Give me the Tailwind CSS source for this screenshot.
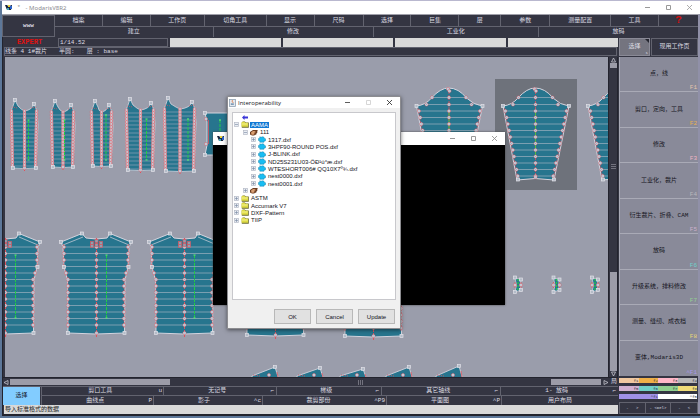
<!DOCTYPE html>
<html lang="en">
<head>
<meta charset="utf-8"/>
<meta name="viewport" content="width=device-width, initial-scale=1"/>
<title>ModarisV8R2</title>
<script src="https://cdn.jsdelivr.net/npm/@tailwindcss/browser@4"></script>
</head>
<body class="h-screen overflow-hidden flex flex-col bg-[#5d7799] border-t border-[#b9b8cf] pl-[2px] pb-[2px] text-[6px] leading-none text-[#dcdce2] font-['Liberation_Mono','Noto_Sans_CJK_SC',monospace]">

<!-- shared icons -->
<svg class="hidden">
  <symbol id="app" viewBox="0 0 8 7"><path d="M0 1l2 0 2 2 2-2 1 0-1 5-4 0z" fill="#18253f"/><path d="M3 1h2v2H3z" fill="#e8d23a"/><path d="M5 2h2v3H5z" fill="#2b62c9"/><path d="M2 4h2v2H2z" fill="#3fa6b8"/></symbol>
  <symbol id="plus" viewBox="0 0 5 5"><rect x=".5" y=".5" width="4" height="4" fill="#e9edf3" stroke="#b4bac6" stroke-width=".7"/><path d="M1 2.500h3M2.500 1v3" stroke="#7484a0" stroke-width=".6"/></symbol>
  <symbol id="minus" viewBox="0 0 5 5"><rect x=".5" y=".5" width="4" height="4" fill="#e9edf3" stroke="#b4bac6" stroke-width=".7"/><path d="M1 2.500h3" stroke="#7484a0" stroke-width=".6"/></symbol>
  <symbol id="folder" viewBox="0 0 8 7"><path d="M.8 1.500l1-1h2l1 1h3v5.200h-7z" fill="#6b6b2c"/><path d="M.5 1.500l1-.8h2l.8 1h2.700v4H.5z" fill="#dedb45"/><path d="M1 3h5.500" stroke="#fbf9a4" stroke-width=".8"/></symbol>
  <symbol id="hand" viewBox="0 0 8 7"><path d="M0 3l3-2h4l1 .8-1 1 .5.7-1 .8v1L4 6.500H2L0 5.500z" fill="#6b3d22"/><path d="M1 3.500l2-1.500h3l-2 1.200 2 .3-2 .8.8.7-1.500.7H1.500z" fill="#d99f73"/></symbol>
  <symbol id="piece" viewBox="0 0 8 7"><path d="M1.800 .8l1.200.5 1.500-.5 1.500.4v1l1.500.6v2l-1.500.4v1H1.800V4.800L.5 4.500V2.500l1.300-.3z" fill="#18bdf2" stroke="#1a86ae" stroke-width=".5"/></symbol>
</svg>

<header class="h-[13px] shrink-0 bg-white flex items-center pl-[3px] text-[#8b8b90]">
  <svg class="w-2 h-[7px]"><use href="#app"/></svg>
  <span class="pl-[4px] pr-[5px]">*</span>
  <h1 class="grow text-[6px] font-['Noto_Sans',sans-serif]">- ModarisV8R2</h1>
  <div class="flex gap-4 pr-2">
    <button aria-label="Minimize"><svg class="w-[5px] h-[5px]" viewBox="0 0 5 5"><path d="M0 2.500h5" stroke="#999"/></svg></button>
    <button aria-label="Maximize"><svg class="w-[5px] h-[5px]" viewBox="0 0 5 5"><path d="M.5.5h4v4h-4z" fill="none" stroke="#999"/></svg></button>
    <button aria-label="Close"><svg class="w-[5px] h-[5px]" viewBox="0 0 5 5"><path d="M0 0l5 5M5 0L0 5" stroke="#999" stroke-width=".8"/></svg></button>
  </div>
</header>

<!-- menu bar -->
<nav class="h-[23px] shrink-0 flex bg-[#343542] border-t border-[#a0a0aa] border-r-2 border-r-[#9090a8]">
  <button class="w-[53px] shrink-0 border border-[#62636f] font-bold">www</button>
  <div class="grow flex flex-col">
    <div class="h-3 grid grid-cols-[48fr_48fr_54fr_62fr_48fr_49fr_48fr_48fr_42fr_49fr_61fr_48fr_39fr] divide-x divide-[#62636f] border-b border-[#62636f]">
      <button>档案</button><button>编辑</button><button>工作页</button><button>切角工具</button><button>显示</button><button>尺码</button><button>选择</button><button>巨集</button><button>层</button><button>参数</button><button>测量配置</button><button>工具</button><button class="text-[#d01010] text-[11px] font-bold">?</button>
    </div>
    <div class="h-[10px] grid grid-cols-[159fr_160fr_166fr_159fr] divide-x divide-[#62636f]">
      <button>建立</button><button>修改</button><button>工业化</button><button>放码</button>
    </div>
  </div>
</nav>

<div class="relative grow min-h-0 flex bg-[#343542] border-l border-[#23242e] border-b-2 border-b-[#23242e]">
  <div class="grow min-w-0 flex flex-col">
    <div class="h-[9px] shrink-0 grid grid-cols-[53px_repeat(5,minmax(0,1fr))] gap-[2px] py-px">
      <label for="pos" class="flex items-center justify-center text-[7px] font-bold text-[#e01010]">EXPERT</label>
      <input id="pos" class="w-full min-w-0 border border-[#62636f] px-px" value="1/14.52"/>
      <input aria-label="Field 1" class="w-full min-w-0 bg-[#d9d9d9]"/>
      <input aria-label="Field 2" class="w-full min-w-0 bg-[#d9d9d9]"/>
      <input aria-label="Field 3" class="w-full min-w-0 bg-[#d9d9d9]"/>
      <input aria-label="Field 4" class="w-full min-w-0 bg-[#d9d9d9]"/>
    </div>
    <div class="h-[9px] shrink-0 mx-px my-px border border-[#62636f] flex items-center gap-3 whitespace-pre"><span>线条 4 1#裁片</span><span>半圆:</span><span>层 : base</span></div>

    <div class="grow min-h-0 flex">
      <svg id="sheet" class="grow min-w-0 ml-[2px] h-full bg-[#9a9dab]"></svg>
      <div class="w-[10px] shrink-0 flex flex-col items-center border-x border-[#23242e]">
        <svg class="w-[5px] h-[6px]" viewBox="0 0 5 6"><path d="M2.500 1L.5 5h4z" fill="none" stroke="#c8c8d0" stroke-width=".8"/></svg>
        <div class="w-[7px] h-[5px] bg-[#9c9ca8]"></div>
        <div class="grow flex items-center pb-[6px]"><svg class="w-[5px] h-[5px]" viewBox="0 0 5 5"><path d="M0 .5h5M0 2.500h5M0 4.500h5" stroke="#9c9ca8" stroke-width=".6"/></svg></div>
        <div class="w-[7px] h-[31%] bg-[#9c9ca8]"></div>
        <svg class="w-[5px] h-[6px]" viewBox="0 0 5 6"><path d="M2.500 5L.5 1h4z" fill="none" stroke="#c8c8d0" stroke-width=".8"/></svg>
      </div>
    </div>

    <div class="h-[9px] shrink-0 flex items-center gap-px border-t border-[#23242e]">
      <svg class="w-[6px] h-[5px]" viewBox="0 0 6 5"><path d="M1 2.500L5 .5v4z" fill="none" stroke="#c8c8d0" stroke-width=".8"/></svg>
      <div class="w-[26%] h-[6px] bg-[#9c9ca8]"></div>
      <div class="grow flex justify-center"><svg class="w-[5px] h-[5px]" viewBox="0 0 5 5"><path d="M.5 0v5M2.500 0v5M4.500 0v5" stroke="#9c9ca8" stroke-width=".6"/></svg></div>
      <div class="w-[50px] h-[6px] bg-[#9c9ca8]"></div>
      <svg class="w-[8px] h-[5px]" viewBox="0 0 6 5"><path d="M5 2.500L1 .5v4z" fill="none" stroke="#c8c8d0" stroke-width=".8"/></svg>
      <button class="pr-px">局</button>
    </div>

    <div class="h-[19px] shrink-0 flex gap-px border-t border-[#62636f]">
      <button class="w-[37px] shrink-0 bg-[#82ccff] text-[#182030]">选择</button>
      <div class="grow grid grid-rows-2">
        <div class="grid grid-cols-[122fr_113fr_105fr_119fr_117fr] divide-x divide-[#62636f] border-b border-l border-[#62636f]">
          <button class="flex items-center pr-px"><span class="grow">剪口工具</span>u</button>
          <button class="flex items-center pr-[2px]"><span class="grow">无记号</span>⌐</button>
          <button class="flex items-center pr-[2px]"><span class="grow">梯级</span>⌐</button>
          <button class="flex items-center pr-[2px]"><span class="grow">其它轴线</span>⌐</button>
          <button class="flex items-center pr-[2px]"><span class="grow">1- 放码</span>⌐</button>
        </div>
        <div class="grid grid-cols-[112fr_109fr_124fr_115fr_116fr] divide-x divide-[#62636f] border-l border-[#62636f]">
          <button class="flex items-center pr-px"><span class="grow">曲线点</span>P</button>
          <button class="flex items-center pr-px"><span class="grow">影子</span>^c</button>
          <button class="flex items-center pr-px"><span class="grow">裁剪部份</span>^P9</button>
          <button class="flex items-center pr-px"><span class="grow">平面图</span>^P</button>
          <button class="flex items-center"><span class="grow">用户布局</span></button>
        </div>
      </div>
    </div>
    <output class="h-[9px] shrink-0 ml-px bg-[#d9d9d9] text-[#1c1c22] flex items-center px-px">导入标准格式的数据</output>
  </div>

  <!-- side menu -->
  <aside class="w-[82px] shrink-0 pl-px flex flex-col border-r-2 border-[#9090a8]">
    <div class="h-[19px] shrink-0 pt-px flex">
      <button class="relative w-[31px] bg-[#74747f] border border-[#8a8a96]">选择<svg class="absolute top-0 right-0 w-1 h-1" viewBox="0 0 4 4"><path d="M0 0h4v4z" fill="#23242e"/></svg><span class="absolute right-px bottom-0 text-[4px]">s</span></button>
      <button class="grow ml-px border border-[#62636f]">现用工作页</button>
    </div>
    <div class="grow min-h-0 grid grid-rows-9 mt-px bg-[#898a99] text-[#15151c] divide-y divide-[#a9aab6] border-l border-[#a9aab6]">
      <button class="relative">点，线<span class="absolute right-px bottom-0 text-[#e6c5ae]">F1</span></button>
      <button class="relative">剪口，定向，工具<span class="absolute right-px bottom-0 text-[#e8b050]">F2</span></button>
      <button class="relative">修改<span class="absolute right-px bottom-0 text-[#f0b4c6]">F3</span></button>
      <button class="relative">工业化，裁片<span class="absolute right-px bottom-0 text-[#b8b8bc]">F4</span></button>
      <button class="relative">衍生裁片、折叠、CAM<span class="absolute right-px bottom-0 text-[#cdb0cd]">F5</span></button>
      <button class="relative">放码<span class="absolute right-px bottom-0 text-[#70d0cc]">F6</span></button>
      <button class="relative">升级系统，排料修改<span class="absolute right-px bottom-0 text-[#94d094]">F7</span></button>
      <button class="relative">测量、缝纫、成衣档<span class="absolute right-px bottom-0 text-[#ead878]">F8</span></button>
      <button class="relative">变体,Modaris3D<span class="absolute right-px bottom-0 text-[#a798ec]">^F1</span></button>
    </div>
    <div class="h-[26px] shrink-0 grid grid-cols-4 grid-rows-3 gap-y-[3px] pt-[2px] pb-[3px] pr-px text-[4px] text-[#33333c]">
      <button class="bg-[#f0c8a0] text-right">f1</button><button class="bg-[#f0b048] text-right">f2</button><button class="bg-[#ffb8c8] text-right">f3</button><button class="bg-[#b8b8b8] text-right">f4</button>
      <button class="bg-[#d0b0d0] text-right">f5</button><button class="bg-[#70d0c8] text-right">f6</button><button class="bg-[#90d090] text-right">f7</button><button class="bg-[#f0dc78] text-right">f8</button>
      <button class="col-span-2 bg-[#a090e8] text-right">^f1</button><button class="col-span-2 bg-white text-right">^f5</button>
    </div>
    <div class="h-[12px] shrink-0 grid grid-cols-3 divide-x divide-[#62636f] border border-[#62636f] text-[4px]">
      <button>- &nbsp; &gt;</button><button>- &lt;Del&gt;</button><button>- &nbsp; &lt;</button>
    </div>
  </aside>

  <!-- console window -->
  <section class="absolute left-[210px] top-[95px] w-[292px] h-[173px] bg-black shadow-[0_0_2px_#444]">
    <div class="h-[13px] bg-white flex items-center justify-between pl-1 pr-2">
      <svg class="w-2 h-[7px]"><use href="#app"/></svg>
      <div class="flex gap-4">
        <button aria-label="Minimize console"><svg class="w-[5px] h-[5px]" viewBox="0 0 5 5"><path d="M0 2.500h5" stroke="#999"/></svg></button>
        <button aria-label="Maximize console"><svg class="w-[5px] h-[5px]" viewBox="0 0 5 5"><path d="M.5.5h4v4h-4z" fill="none" stroke="#999"/></svg></button>
        <button aria-label="Close console"><svg class="w-[5px] h-[5px]" viewBox="0 0 5 5"><path d="M0 0l5 5M5 0L0 5" stroke="#888" stroke-width=".8"/></svg></button>
      </div>
    </div>
  </section>

  <!-- interoperability dialog -->
  <section class="absolute left-[224px] top-[59px] w-[174px] h-[233px] flex flex-col bg-[#f0f0f0] border border-[#8c8c90] shadow-[0_1px_4px_#0008] text-[#15151c] font-['Liberation_Sans',sans-serif]">
    <div class="h-[11px] shrink-0 flex items-center bg-white pl-px pr-2">
      <svg class="w-[7px] h-[8px]" viewBox="0 0 7 8"><rect x=".4" y=".4" width="6.200" height="7.200" fill="#e3e9ef" stroke="#8295a8" stroke-width=".7"/><path d="M3.500 1.200q-1 1 0 1.600t0 1.200" fill="none" stroke="#d9662a" stroke-width=".8"/><path d="M1.800 4.500h3v1.200h-3z" fill="#53799c"/></svg>
      <h2 class="grow pl-[2px] text-[6px] font-['Open_Sans',sans-serif]">Interoperability</h2>
      <div class="flex gap-4">
        <button aria-label="Minimize dialog"><svg class="w-[5px] h-[5px]" viewBox="0 0 5 5"><path d="M0 2.500h5" stroke="#333" stroke-width=".8"/></svg></button>
        <button aria-label="Maximize dialog"><svg class="w-[5px] h-[5px]" viewBox="0 0 5 5"><path d="M.5.5h4v4h-4z" fill="none" stroke="#ccc" stroke-width=".8"/></svg></button>
        <button aria-label="Close dialog"><svg class="w-[5px] h-[5px]" viewBox="0 0 5 5"><path d="M0 0l5 5M5 0L0 5" stroke="#222" stroke-width=".8"/></svg></button>
      </div>
    </div>
    <div class="grow mx-1 mt-1 pt-px bg-white border border-[#c8c8cc]">
      <ul id="tree" class="h-[110px] grid grid-rows-15"></ul>
    </div>
    <div class="h-[28px] shrink-0 pt-[9px] pb-1 px-[5px] flex justify-end gap-[5px]">
      <button class="w-[37px] bg-[#e1e1e1] border border-[#b8b8b8]">OK</button>
      <button class="w-[37px] bg-[#e1e1e1] border border-[#b8b8b8]">Cancel</button>
      <button class="w-[37px] bg-[#e1e1e1] border border-[#b8b8b8]">Update</button>
    </div>
  </section>
</div>

<script>
  // [indent, expander, icon, label]
  const rows = [
    [0, "", "arrow", ""],
    [0, "minus", "folder", "AAMA"],
    [1, "minus", "hand", "111"],
    [2, "plus", "piece", "1317.dxf"],
    [2, "plus", "piece", "3HPF90-ROUND POS.dxf"],
    [2, "plus", "piece", "J-BLINK.dxf"],
    [2, "plus", "piece", "ND25S231U03-ÖÐ¹ú°æ.dxf"],
    [2, "plus", "piece", "WTESHORT006# QQ10X7º¾.dxf"],
    [2, "plus", "piece", "nest0000.dxf"],
    [2, "plus", "piece", "nest0001.dxf"],
    [1, "plus", "hand", ""],
    [0, "plus", "folder", "ASTM"],
    [0, "plus", "folder", "Accumark V7"],
    [0, "plus", "folder", "DXF-Pattern"],
    [0, "plus", "folder", "TIIP"]
  ];
  const pads = ["pl-px", "pl-[10px]", "pl-[18px]"];
  document.getElementById("tree").innerHTML = rows.map(([lvl, exp, icon, label]) => {
    if (icon === "arrow") {
      return `<li class="flex items-center pl-[9px]"><svg class="w-[6px] h-[5px]" viewBox="0 0 6 5"><path d="M0 2.500L2.500 0v1.500H6v2H2.500V5z" fill="#3a36d8"/></svg></li>`;
    }
    const sel = label === "AAMA" ? "bg-[#0f78d4] text-white" : "";
    return `<li class="flex items-center ${pads[lvl]}">
      <svg class="w-[5px] h-[5px] mr-[2px]"><use href="#${exp}"/></svg>
      <svg class="w-2 h-[7px] mr-px"><use href="#${icon}"/></svg>
      <span class="px-px ${sel}">${label}</span></li>`;
  }).join("");

  const TEAL = "#27758e", RED = "#e0525c", PALE = "#d4d4de";

  function dot(x, y) {
    return `<circle cx="${x}" cy="${y}" r="1.6" fill="#9fb2c4" stroke="${RED}" stroke-width=".5"/><circle cx="${x}" cy="${y}" r="1" fill="none" stroke="#e4e6ec" stroke-width=".6"/>`;
  }
  function knot(x, y) {
    return `<rect x="${x - 1.5}" y="${y - 1.5}" width="3" height="3" fill="#b4bcc8" stroke="#e2e2e8" stroke-width=".7"/>`;
  }
  function line(x1, y1, x2, y2, color, w, dash) {
    return `<path d="M${x1} ${y1}L${x2} ${y2}" stroke="${color}" stroke-width="${w}" stroke-dasharray="${dash || "none"}" fill="none"/>`;
  }
  function grain(x, y1, y2) {
    return line(x, y1, x, y2, "#22cc44", 1, "3 1") + [y1, y2].map(y =>
      `<path d="M${x - 1} ${y - 1}l2 2m0-2l-2 2" stroke="#5fe07c" stroke-width=".6"/>`).join("");
  }

  // narrow panel with seam chains on both sides and in the middle
  function panel(l, r, c, top, bot, green, g1, g2) {
    const n = top + 11;
    let s = `<path d="M${l + 5} ${top}L${l + 8} ${n - 5}Q${c - 3} ${n - 1} ${c} ${n}Q${r - 6} ${n - 1} ${r - 4} ${top + 4}L${r - 1} ${n}L${r} ${n + 14}L${r - 2} ${bot}Q${c} ${bot + 1} ${l + 3} ${bot}L${l + 1} ${n + 14}L${l + 1} ${n}L${l + 3} ${n - 5}Z" fill="${TEAL}" stroke="${PALE}" stroke-width=".8"/>`;
    for (let y = n + 3; y < bot; y += 4) s += line(l + 2, y, r - 2, y, "#7f9db2", .8);
    for (const x of [l + 1.5, c, r - 1.5]) {
      const lean = x === c ? 0 : x < c ? 1 : -1;
      s += line(x, n, x + lean, bot, "#dfa9b2", 2.8);
      for (let y = n; y < bot; y += 3) s += `<circle cx="${x + lean * (y - n) / (bot - n)}" cy="${y}" r="1.4" fill="#c9cfd9" stroke="${RED}" stroke-width=".5"/>`;
    }
    s += line(l + 2, n - 4, l + 8, n - 3, RED, .7, "1 1") + line(r - 7, n - 3, r - 1, n - 4, RED, .7, "1 1");
    s += line(c, bot, c, bot + 3, RED, 1);
    return s + grain(green, g1, g2) + knot(l + 5, top) + knot(r - 4, top + 4) + knot(l + 3, bot) + knot(r - 2, bot) + dot(c, bot);
  }

  function sleeve(dx) {
    let s = `<g transform="translate(${dx} 0)"><path d="M503 106Q512 105 518 98Q527 88 535 88Q545 88 553 98Q560 105 569 106L554 180Q535 177 517 180Z" fill="${TEAL}" stroke="${PALE}" stroke-width="1"/>`;
    s += line(535.5, 89, 535.5, 177, RED, .8, "2 1") + line(535.5, 111, 535.5, 156, "#4fc040", 1);
    s += line(518, 97.5, 552, 97.5, "#8fa9ba", .8) + line(513, 104.5, 560, 104.5, "#8fa9ba", .8);
    for (const [a, y] of [[518.5, 97.5], [513, 104.5]]) s += dot(a, y) + dot(535.5, y) + dot(1071 - a, y);
    for (let i = 0; i < 11; i++) {
      const y = 111 + i * 6.5, k = (y - 106) / 74, a = 503.5 + 14 * k, b = 568.5 - 15 * k;
      s += line(a, y, b, y, "#8fa9ba", .8) + line(a, y - 3, a + 1, y + 3, RED, .6) + line(b, y - 3, b - 1, y + 3, RED, .6) + dot(a + 1, y) + dot(535.5, y) + dot(b - 1, y);
    }
    s += knot(503, 106) + knot(569, 106) + knot(518, 179.5) + knot(554, 179.5) + dot(534.5, 89) + dot(536, 91) + dot(535.5, 177);
    return s + "</g>";
  }

  function body(dx, dy) {
    let s = `<g transform="translate(${dx} ${dy})"><path d="M61 242L82 233.500L86 238Q96 240 107 238L110 233.500L131 242L129 248L128 267L125 280L124.500 333Q96 335 68 333L67.500 280L64 267L63 247Z" fill="${TEAL}" stroke="${PALE}" stroke-width="1"/>`;
    s += line(63, 245, 83, 237, PALE, .7) + line(110, 237, 129, 245, PALE, .7);
    s += line(96.5, 238, 96.5, 337, RED, 1, "3 1");
    for (let i = 0; i < 13; i++) {
      const y = 247 + i * 6.5, inset = i < 4 ? 0 : Math.min(4, (i - 3) * 2), a = 64 + inset, b = 128 - inset;
      s += line(a, y, b, y, "#8fa9ba", .8) + line(a - .5, y - 3, a, y + 3, RED, .6) + line(b + .5, y - 3, b, y + 3, RED, .6);
      s += dot(a, y) + dot(96.5, y) + dot(b, y);
    }
    for (const [x, y] of [[92, 243], [92, 246], [101, 243], [101, 246], [96.5, 241], [96.5, 245]])
      s += `<rect x="${x - 1.5}" y="${y - 1.5}" width="3" height="3" fill="#8fa0b0" stroke="${RED}" stroke-width=".6"/>`;
    s += grain(106.5, 255, 318);
    for (const [x, y] of [[61, 242], [82, 233.5], [110, 233.5], [131, 242], [64, 267], [128.5, 267], [68, 333], [124.5, 333]]) s += knot(x, y);
    return s + dot(96.5, 333) + "</g>";
  }

  function tab(x) {
    return `<path d="M${x - 3} 278L${x + 3} 279.500L${x + 2} 285L${x + 3} 290L${x - 3} 292L${x - 1.5} 285Z" fill="${TEAL}" stroke="${PALE}" stroke-width=".7"/>`
      + line(x - 3, 282, x - 3, 288, RED, .8) + line(x + 3, 282, x + 3, 288, RED, .8) + line(x, 279, x, 290, "#22cc44", 1.2, "2 1")
      + knot(x - 3, 277.5) + knot(x + 3, 279.5) + knot(x + 3, 290) + knot(x - 3, 292) + dot(x - 3, 285) + dot(x + 3, 285);
  }

  function corner(x, y) {
    return `<path d="M${x - 23} 376L${x} ${y}L${x + 4} 380H${x - 23}Z" fill="${TEAL}" stroke="${PALE}" stroke-width=".9"/>`
      + line(x - 22, 375, x - 15, 376, RED, .8, "1 1") + dot(x - 6, 375) + knot(x, y) + line(x + 2, y + 5, x + 3, 377, RED, .8);
  }

  // drawing space starts at 5,57 of the work area
  document.getElementById("sheet").innerHTML = `<g transform="translate(-5 -57)">
    <rect x="495" y="79" width="82" height="111" fill="#6e727b"/>`
    + panel(10, 38, 24.5, 100, 168, 28.5, 120, 160)
    + panel(50, 75, 63, 101, 167, 64.5, 120, 160)
    + panel(90, 113, 101.5, 101, 166, 106, 115, 160)
    + panel(125, 155, 140.5, 99, 170, 146.5, 119, 160)
    + panel(163, 196, 180, 98, 171, 188, 119, 160)
    + `<path d="M205 113h30v42h-30l2-10v-23z" fill="${TEAL}" stroke="${PALE}"/>`
    + line(208.5, 120, 208.5, 144, RED, .8) + grain(220, 120, 150) + knot(205, 113) + knot(205, 155) + dot(206, 119) + dot(206, 144)
    + sleeve(-86.5) + sleeve(0) + sleeve(85)
    + body(-91, 0) + body(0, 0) + body(88, 0) + body(179, 2) + body(277, 3)
    + tab(518) + tab(556.5) + tab(595)
    + corner(275, 367) + corner(320, 368) + corner(363, 369) + corner(409, 367) + corner(459, 366)
    + "</g>";
</script>
</body>
</html>
